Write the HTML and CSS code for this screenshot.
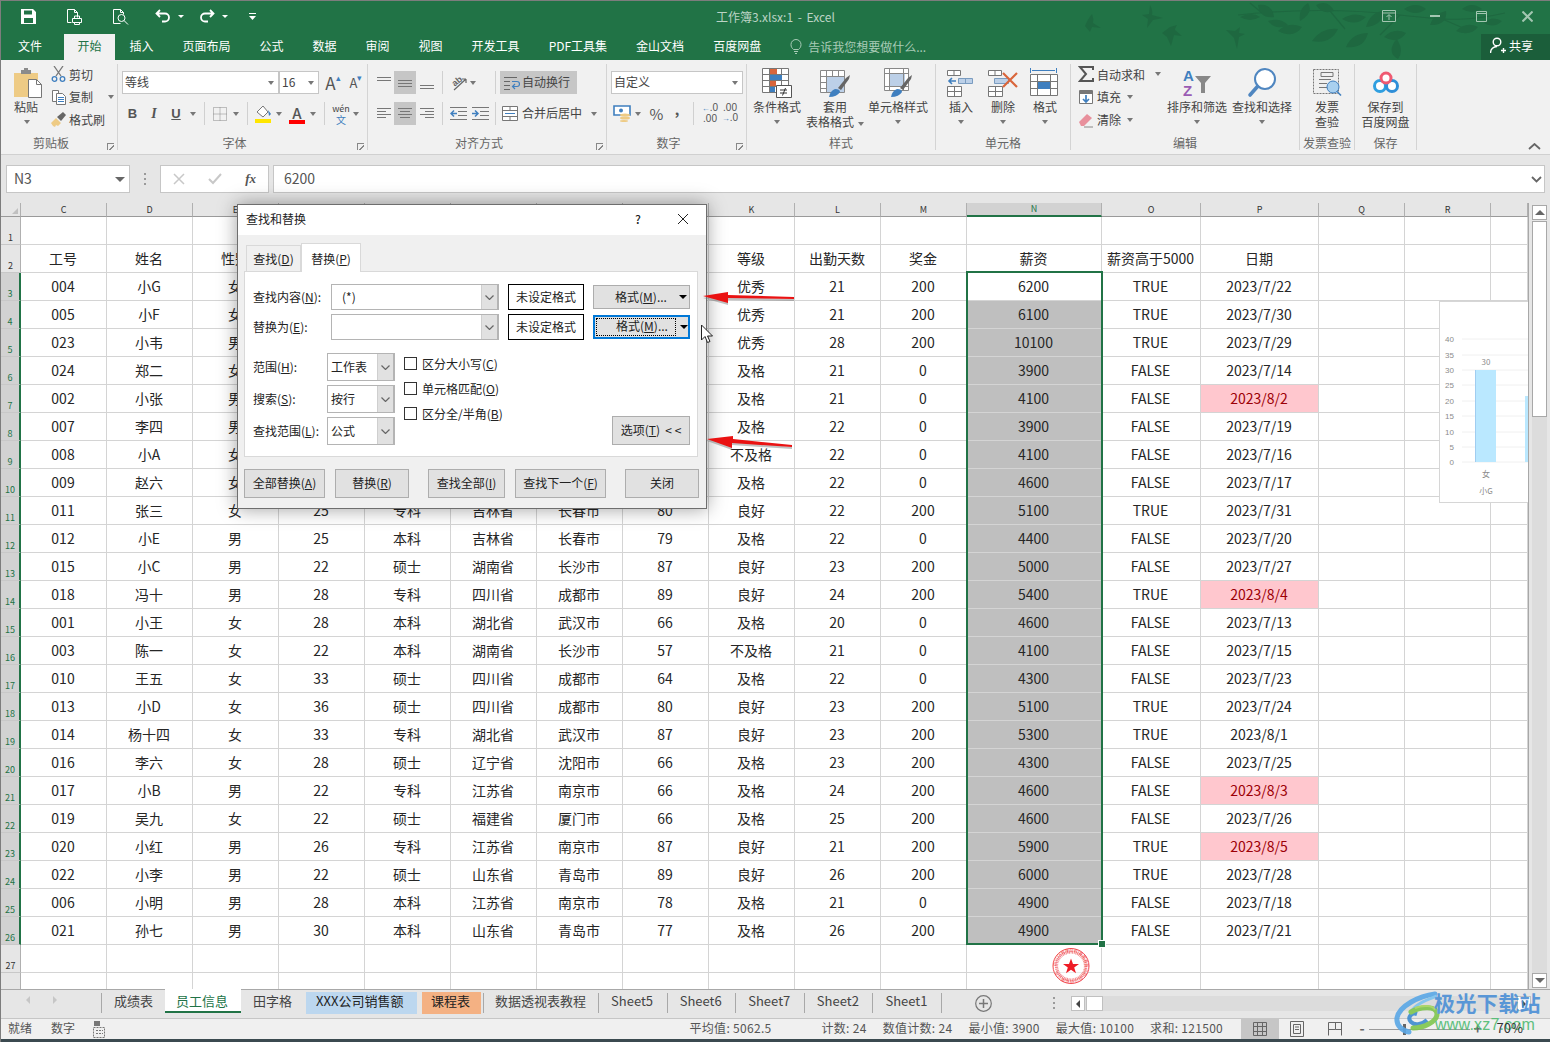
FILE: index.html
```html
<!DOCTYPE html>
<html lang="zh-CN">
<head>
<meta charset="utf-8">
<title>工作簿3.xlsx:1 - Excel</title>
<link rel="stylesheet" href="styles.css">
</head>
<body>
<div class="app">
  <header class="titlebar">
    <svg class="leaves" viewBox="1080 0 430 60" width="430" height="60">
      <path class="branch" d="M1238 14C1290 8 1350 8 1400 14S1470 20 1505 12M1262 12L1250 2M1330 10L1345 28M1400 14L1380 34M1440 17L1470 30"/>
      <path d="M1085 25q4-9 7-12q2 5 1 9l8 5l-9-1l-2 5zM1150 4q3 5 2 10l11 3l-10 2l-6 8l1-9l-6-4l7-1zM1162 32l8-6l7-2q-2 3-2 5l7 6l-8-1l-3 11l-4-9zM1226 29l9 1l5-4l-1 6l6 1l-6 3l-2 12l-3-11z"/>
      <path d="M1240 16q12-6 20 0q-10 6-20 0zM1258 4q14-2 16 12q-14 2-16-12zM1268 20q12-4 20 4q-12 6-20-4zM1278 30q10-10 24-4q-8 12-24 4zM1300 20q-2-12 8-18q6 10-8 18zM1316 4q12-6 18 6q-12 4-18-6zM1312 40q10-14 26-12q-8 16-26 12zM1342 18q12-8 24-2q-10 10-24 2zM1346 46q6-14 22-14q-4 16-22 14zM1366 26q4-14 16-16q2 14-16 16zM1384 36q10-10 22-4q-8 12-22 4zM1392 46q4-10 6-6q6 10 0 18q-8-4-6-12zM1404 8q12-8 22 0q-10 8-22 0zM1430 24q4-12 16-14q2 14-16 14zM1456 30q10-10 22-4q-8 10-22 4zM1462 8q10-8 20 0q-10 6-20 0zM1484 22q8-8 18-2q-8 8-18 2z"/>
    </svg>
    <div class="qat-line">
      <div class="qat">
        <span class="qb qb-save"><svg width="15" height="15" viewBox="0 0 15 15"><path class="wf" d="M0 0h12l3 3v12H0zM3 1.500v4h8v-4zM3 9v5h9V9z" fill-rule="evenodd"/></svg></span>
        <span class="qb qb-wide"><svg width="17" height="17" viewBox="0 0 17 17"><path class="ws" d="M1.500 1.500h7l3 3v5M1.500 1.500v13h4M8.500 1.500v3h3M6.500 10.500h9v4h-9zM8.500 10.500v-2.500h5v2.500M8.500 14.500v2h5v-2"/></svg></span>
        <span class="qb qb-wide"><svg width="17" height="17" viewBox="0 0 17 17"><path class="ws" d="M1.500 1.500h7l3 3v2M1.500 1.500v14h7M8.500 1.500v3h3"/><circle class="ws" cx="9.500" cy="10" r="3.500"/><path class="ws" d="M12 12.500l4 4"/></svg></span>
        <span class="qb qb-undo"><svg width="16" height="14" viewBox="0 0 16 14"><path class="ws2" d="M5 1L1.500 4.500L5 8M2 4.500h8a4 4 0 0 1 0 8H7"/></svg></span>
        <span class="qb qb-car"><i class="car car-w"></i></span>
        <span class="qb qb-undo qb-gap"><svg width="16" height="14" viewBox="0 0 16 14"><path class="ws2" d="M11 1l3.500 3.500L11 8M14 4.500H6a4 4 0 0 0 0 8h3"/></svg></span>
        <span class="qb qb-car"><i class="car car-w"></i></span>
        <span class="qb qb-cust"><svg width="9" height="9" viewBox="0 0 9 9"><path class="ws" d="M1 1.500h7"/><path class="wf" d="M1 4h7L4.500 8z"/></svg></span>
      </div>
      <div class="doc-title">工作簿3.xlsx:1 - Excel</div>
      <div class="winbtns">
        <span class="wb"><svg width="14" height="12" viewBox="0 0 14 12"><path class="ds" d="M.5.500h13v11H.5zM.5 3h13M7 10V5M4.500 7L7 4.500L9.500 7"/></svg></span>
        <span class="wb"><svg width="10" height="2" viewBox="0 0 10 2"><path class="ds2" d="M0 1h10"/></svg></span>
        <span class="wb"><svg width="11" height="11" viewBox="0 0 11 11"><path class="ds" d="M.5.500h10v10H.5zM.5 2.500h10"/></svg></span>
        <span class="wb"><svg width="11" height="11" viewBox="0 0 11 11"><path class="ds2" d="M.5.500l10 10M10.500.500l-10 10"/></svg></span>
      </div>
    </div>
    <nav class="tabs-line">
      <span class="rt rt-file">文件</span>
      <span class="rt rt-active">开始</span>
      <span class="rt">插入</span>
      <span class="rt">页面布局</span>
      <span class="rt">公式</span>
      <span class="rt">数据</span>
      <span class="rt">审阅</span>
      <span class="rt">视图</span>
      <span class="rt">开发工具</span>
      <span class="rt">PDF工具集</span>
      <span class="rt">金山文档</span>
      <span class="rt">百度网盘</span>
      <span class="hint"><svg width="12" height="15" viewBox="0 0 12 15"><path class="hs" d="M3.500 10.500C2 9 1 8 1 5.500a5 5 0 0 1 10 0C11 8 10 9 8.500 10.500zM4 12.500h4M5 14.500h2"/></svg>告诉我您想要做什么...</span>
      <span class="share"><svg width="16" height="17" viewBox="0 0 16 17"><circle class="ws ws-b" cx="7" cy="5" r="3.800"/><path class="ws ws-b" d="M.5 16c0-4 3-6.500 6.500-6.500M11 13.500h5M13.500 11v5"/></svg>共享</span>
    </nav>
  </header>

  <section class="ribbon">
    <div class="group g1">
      <div class="gbody">
        <div class="big paste">
          <svg width="30" height="30" viewBox="0 0 30 30"><path fill="#eecb85" d="M0 5h24v24H0z"/><path fill="#8b8b8b" d="M7 2h3V0h4v2h3v4H7z"/><path fill="#fff" stroke="#777" d="M14.500 11.500h8l5 5v13h-13z"/><path fill="none" stroke="#777" d="M22.500 11.500v5h5"/></svg>
          <span>粘贴</span><span class="cl"><i class="car"></i></span>
        </div>
        <div class="stack clip">
          <div class="srow"><svg class="sic" width="16" height="16" viewBox="0 0 16 16"><path fill="none" stroke="#777" stroke-width="1.300" d="M3 0l7 10M12 0L5 10"/><circle cx="3.500" cy="13" r="2.300" fill="none" stroke="#3f7fbf" stroke-width="1.300"/><circle cx="11.500" cy="13" r="2.300" fill="none" stroke="#3f7fbf" stroke-width="1.300"/></svg>剪切</div>
          <div class="srow"><svg class="sic" width="16" height="16" viewBox="0 0 16 16"><path fill="#fff" stroke="#777" d="M1.500 1.500h6v11h-6z"/><path fill="#fff" stroke="#777" d="M5.500 4.500h6l3 3v8h-9z"/><path stroke="#3f7fbf" d="M7 8.500h6M7 10.500h6M7 12.500h6"/></svg>复制<i class="car car-after"></i></div>
          <div class="srow"><svg class="sic" width="16" height="16" viewBox="0 0 16 16"><path fill="#eecb85" d="M0 11l5-5l5 5l-3 3l-2-1l-1 2l-2-1z"/><path fill="#666" d="M6 5l6-5l3 3l-5 6z"/></svg>格式刷</div>
        </div>
      </div>
      <div class="glabel">剪贴板</div>
      <i class="launch"></i>
    </div>

    <div class="group g2">
      <div class="gbody col">
        <div class="trow pl4">
          <div class="combo cb-font"><span>等线</span><i class="car"></i></div>
          <div class="combo cb-size"><span>16</span><i class="car"></i></div>
          <span class="tool w24 ml2 aa">A<sup class="up">▴</sup></span>
          <span class="tool w22 aa small">A<sup class="dn">▾</sup></span>
        </div>
        <div class="trow pl4 second">
          <span class="tool w21 fb">B</span>
          <span class="tool w22 fi">I</span>
          <span class="tool w22 fu">U</span>
          <span class="tool w12"><i class="car"></i></span>
          <span class="tool w10"><i class="vsep"></i></span>
          <span class="tool w22"><svg width="14" height="14" viewBox="0 0 14 14"><path fill="none" stroke="#888" stroke-dasharray="1 1" d="M.5.500h13v13H.5zM7 .500v13M.5 7h13"/></svg></span>
          <span class="tool w10"><i class="car"></i></span>
          <span class="tool w12"><i class="vsep"></i></span>
          <span class="tool w20"><svg width="17" height="19" viewBox="0 0 17 19"><path fill="#fff" stroke="#777" d="M2 8l6-6l5 6l-5 5z"/><path fill="#3f7fbf" d="M13 6l3 4l-2 2z"/><path fill="#ffe600" d="M0 15h16v4H0z"/></svg></span>
          <span class="tool w12"><i class="car"></i></span>
          <span class="tool w24 fontcol"><span class="ca">A</span><i class="redbar"></i></span>
          <span class="tool w8"><i class="car"></i></span>
          <span class="tool w14"><i class="vsep"></i></span>
          <span class="tool w20 wen"><span>wén</span><b>文</b></span>
          <span class="tool w10"><i class="car"></i></span>
        </div>
      </div>
      <div class="glabel">字体</div>
      <i class="launch"></i>
    </div>

    <div class="group g3">
      <div class="gbody col">
        <div class="trow pl6">
          <span class="tool w20"><svg width="16" height="16" viewBox="0 0 16 16"><path class="ln" d="M1 2.500h14M1 5.500h14"/></svg></span>
          <span class="tool w22 hl"><svg width="16" height="16" viewBox="0 0 16 16"><path class="ln" d="M1 5.500h14M1 8.500h14M1 11.500h14"/></svg></span>
          <span class="tool w22"><svg width="16" height="16" viewBox="0 0 16 16"><path class="ln" d="M1 10.500h14M1 13.500h14"/></svg></span>
          <span class="tool w8"><i class="vsep"></i></span>
          <span class="tool w24"><svg width="20" height="17" viewBox="0 0 20 17"><text class="abtxt" x="4" y="11" transform="rotate(-40 8 8)">ab</text><path fill="none" stroke="#666" stroke-width="1.200" d="M6 16L18 5M18 5v4M18 5h-4"/></svg></span>
          <span class="tool w6"><i class="car"></i></span>
          <span class="w14"></span>
          <span class="tool w10"><i class="vsep"></i></span>
          <span class="wrap-btn"><svg width="17" height="16" viewBox="0 0 17 16"><path fill="none" stroke="#666" d="M1 2.500h13M1 6.500h6M1 10.500h6M1 14.500h6"/><path fill="none" stroke="#3f7fbf" stroke-width="1.200" d="M9 6.500h5a2 2 0 0 1 0 5h-4M12 9l-2.500 2.500L12 14"/></svg><span class="bt">自动换行</span></span>
        </div>
        <div class="trow pl6 second">
          <span class="tool w20"><svg width="16" height="16" viewBox="0 0 16 16"><path class="ln" d="M1 2.500h14M1 5.500h9M1 8.500h14M1 11.500h9"/></svg></span>
          <span class="tool w22 hl"><svg width="16" height="16" viewBox="0 0 16 16"><path class="ln" d="M1 2.500h14M3 5.500h10M1 8.500h14M3 11.500h10"/></svg></span>
          <span class="tool w22"><svg width="16" height="16" viewBox="0 0 16 16"><path class="ln" d="M1 2.500h14M6 5.500h9M1 8.500h14M6 11.500h9"/></svg></span>
          <span class="tool w8"><i class="vsep"></i></span>
          <span class="tool w24"><svg width="17" height="14" viewBox="0 0 17 14"><path class="ln" d="M0 .500h17M8 4.500h9M8 8.500h9M0 12.500h17"/><path fill="none" stroke="#3f7fbf" stroke-width="1.500" d="M7 6.500H1M4 3.500l-3 3l3 3"/></svg></span>
          <span class="tool w20"><svg width="17" height="14" viewBox="0 0 17 14"><path class="ln" d="M0 .500h17M8 4.500h9M8 8.500h9M0 12.500h17"/><path fill="none" stroke="#3f7fbf" stroke-width="1.500" d="M0 6.500h6M3 3.500l3 3l-3 3"/></svg></span>
          <span class="tool w10"><i class="vsep"></i></span>
          <span class="tool w20"><svg width="16" height="15" viewBox="0 0 16 15"><path fill="#fff" stroke="#777" d="M.5.500h15v14H.5zM.5 4.500h15M.5 10.500h15M8 .500v4M8 10.500v4"/><path stroke="#3f7fbf" d="M3 7.500h10"/></svg></span>
          <span class="merge-text bt">合并后居中</span>
          <span class="tool w24"><i class="car"></i></span>
        </div>
      </div>
      <div class="glabel">对齐方式</div>
      <i class="launch"></i>
    </div>

    <div class="group g4">
      <div class="gbody col">
        <div class="trow pl4">
          <div class="combo cb-num"><span>自定义</span><i class="car"></i></div>
        </div>
        <div class="trow pl4 second">
          <span class="tool w22"><svg width="18" height="17" viewBox="0 0 18 17"><path fill="#fff" stroke="#3f7fbf" stroke-width="1.600" d="M1 1h16v9H1z"/><circle cx="8" cy="5.500" r="2" fill="#3f7fbf"/><ellipse cx="12" cy="10" rx="5" ry="1.500" fill="#eecb85"/><ellipse cx="12" cy="13" rx="5" ry="1.500" fill="#eecb85"/><ellipse cx="11" cy="16" rx="4" ry="1" fill="#eecb85"/></svg></span>
          <span class="tool w10"><i class="car"></i></span>
          <span class="tool w27 pct">%</span>
          <span class="tool w14 comma">,</span>
          <span class="tool w18"><i class="vsep"></i></span>
          <span class="tool w16 dec"><span><b>←</b>.0</span><span>.00</span></span>
          <span class="tool w24 dec"><span>.00</span><span><b>→</b>.0</span></span>
        </div>
      </div>
      <div class="glabel">数字</div>
      <i class="launch"></i>
    </div>

    <div class="group g5">
      <div class="gbody">
        <div class="big w60">
          <svg width="30" height="30" viewBox="0 0 30 30"><path fill="#fff" stroke="#777" d="M.5.500h26v24H.5zM7.500.500v24M.5 6.500h26M.5 12.500h26M.5 18.500h26M19.500.500v24"/><path fill="#d9663c" d="M8 1h7v5H8zM8 13h6v5H8z"/><path fill="#3f7fbf" d="M8 7h12v5H8zM8 19h5v5H8z"/><path fill="#fff" stroke="#555" d="M14.500 17.500h15v12h-15z"/><path stroke="#333" fill="none" d="M18 22h7M18 25h7M23.500 20l-3 7.500"/></svg>
          <span>条件格式</span><span class="cl"><i class="car"></i></span>
        </div>
        <div class="big w56">
          <svg width="30" height="30" viewBox="0 0 30 30"><path fill="#fff" stroke="#888" d="M.5 2.500h24v22H.5zM6.500 2.500v22M12.500 2.500v22M18.500 2.500v22M.5 8.500h24M.5 14.500h24M.5 20.500h24"/><path fill="#bcd0e8" d="M7 9h17v15H7z"/><path fill="#3f7fbf" d="M9 29q1-6 6-8q5 0 5 3q-3 5-11 5z"/><path fill="#666" d="M18 20l8-10l4-3l-1 4l-8 11z"/></svg>
          <span>套用</span><span>表格格式<i class="car car-inl"></i></span>
        </div>
        <div class="big w70">
          <svg width="30" height="30" viewBox="0 0 30 30"><path fill="#fff" stroke="#888" d="M1.500.500h24v22h-24z"/><path fill="#bcd0e8" d="M6 6h16v13H6z"/><path stroke="#888" fill="none" d="M6.500.500v22M20.500.500v22M1.500 5.500h24M1.500 18.500h24"/><path fill="#3f7fbf" d="M8 29q1-6 6-8q5 0 5 3q-3 5-11 5z"/><path fill="#666" d="M17 20l8-10l4-3l-1 4l-8 11z"/></svg>
          <span>单元格样式</span><span class="cl"><i class="car"></i></span>
        </div>
      </div>
      <div class="glabel">样式</div>
    </div>

    <div class="group g6">
      <div class="gbody">
        <div class="big w50">
          <svg width="30" height="30" viewBox="0 0 30 30"><g fill="#fff" stroke="#777"><path d="M1.500 2.500h13v5h-13zM8 2.500v5M1.500 18.500h14v10h-14zM8.500 18.500v10M1.500 23.500h14"/></g><path fill="#bcd0e8" stroke="#7a9cc0" d="M12.500 10.500h14v5h-14zM19.500 10.500v5"/><path fill="none" stroke="#3f7fbf" stroke-width="1.600" d="M3 13h7M6 10l-3 3l3 3"/></svg>
          <span>插入</span><span class="cl"><i class="car"></i></span>
        </div>
        <div class="big w34">
          <svg width="30" height="30" viewBox="0 0 30 30"><g fill="#fff" stroke="#777"><path d="M.5 2.500h13v5H.5zM7 2.500v5M.5 18.500h14v10H.5zM7.500 18.500v10M.5 23.500h14"/></g><path fill="#bcd0e8" stroke="#7a9cc0" d="M6.500 10.500h14v5h-14z"/><path fill="none" stroke="#d9663c" stroke-width="2.200" d="M15 5l14 14M29 5L15 19"/></svg>
          <span>删除</span><span class="cl"><i class="car"></i></span>
        </div>
        <div class="big w50">
          <svg width="30" height="30" viewBox="0 0 30 30"><path fill="none" stroke="#3f7fbf" d="M.5 0v5M26.500 0v5M2 2.500h23"/><path fill="#fff" stroke="#777" d="M.5 6.500h27v21H.5zM7.500 6.500v21M20.500 6.500v21M.5 13.500h27M.5 20.500h27"/><path fill="#3f7fbf" d="M8 14h12v7H8z"/></svg>
          <span>格式</span><span class="cl"><i class="car"></i></span>
        </div>
      </div>
      <div class="glabel">单元格</div>
    </div>

    <div class="group g7">
      <div class="gbody">
        <div class="stack edit">
          <div class="srow"><svg class="sic" width="16" height="16" viewBox="0 0 16 16"><path fill="none" stroke="#555" stroke-width="2" d="M15 4V1H2l6 7l-6 7h13v-3"/></svg>自动求和<i class="car car-sum"></i></div>
          <div class="srow"><svg class="sic" width="16" height="16" viewBox="0 0 16 16"><path fill="#fff" stroke="#777" d="M1.500 1.500h13v13h-13z"/><path fill="#777" d="M2 2h12v3H2z"/><path fill="none" stroke="#3f7fbf" stroke-width="1.700" d="M8 6v7M5 10l3 3l3-3"/></svg>填充<i class="car car-after2"></i></div>
          <div class="srow"><svg class="sic" width="16" height="16" viewBox="0 0 16 16"><path fill="#e8909c" d="M1 10l8-8l5 4l-8 8H3z"/><path stroke="#888" d="M6 15h9"/></svg>清除<i class="car car-after2"></i></div>
        </div>
        <div class="big w60">
          <svg width="30" height="30" viewBox="0 0 30 30"><text x="1" y="13" class="az a">A</text><text x="1" y="28" class="az z">Z</text><path fill="#888" d="M13 8h16l-6 7v10h-4V15z"/></svg>
          <span>排序和筛选</span><span class="cl"><i class="car"></i></span>
        </div>
        <div class="big w70">
          <svg width="30" height="30" viewBox="0 0 30 30"><circle cx="18" cy="11" r="10" fill="#fff" stroke="#4f86c0" stroke-width="2"/><path stroke="#4f86c0" stroke-width="3.600" stroke-linecap="round" d="M10.500 18.500L3 27"/></svg>
          <span>查找和选择</span><span class="cl"><i class="car"></i></span>
        </div>
      </div>
      <div class="glabel">编辑</div>
    </div>

    <div class="group g8">
      <div class="gbody">
        <div class="big w54">
          <svg width="30" height="30" viewBox="0 0 30 30"><path fill="#efefef" stroke="#777" stroke-dasharray="2 1" d="M1.500 1.500h25v24h-25z"/><path fill="none" stroke="#777" d="M9 4.500h12v4H9zM7 11.500h12M7 15.500h8M7 19.500h8"/><circle cx="21" cy="19" r="6" fill="#a9d0ef" stroke="#3f7fbf"/><path stroke="#3f7fbf" stroke-width="1.600" d="M25 23.500l4 4"/></svg>
          <span>发票</span><span>查验</span>
        </div>
      </div>
      <div class="glabel">发票查验</div>
    </div>

    <div class="group g9">
      <div class="gbody">
        <div class="big w61">
          <svg width="30" height="30" viewBox="0 0 30 30"><circle cx="9" cy="18" r="5.500" fill="#fff" stroke="#2f9fe0" stroke-width="3"/><circle cx="21" cy="18" r="5.500" fill="#fff" stroke="#2f8fd8" stroke-width="3"/><circle cx="15" cy="10" r="5" fill="#fff" stroke="#ef5a72" stroke-width="3"/></svg>
          <span>保存到</span><span>百度网盘</span>
        </div>
      </div>
      <div class="glabel">保存</div>
    </div>
    <div class="collapse"><svg width="13" height="7" viewBox="0 0 13 7"><path fill="none" stroke="#666" stroke-width="1.800" d="M1 6l5.500-5L12 6"/></svg></div>
  </section>

  <section class="formula">
    <div class="namebox"><span>N3</span><i class="car car-big"></i></div>
    <div class="fdots"><i></i><i></i><i></i></div>
    <div class="fbtns">
      <svg width="12" height="12" viewBox="0 0 12 12"><path fill="none" stroke="#c8c8c8" stroke-width="1.500" d="M1 1l10 10M11 1L1 11"/></svg>
      <svg width="14" height="12" viewBox="0 0 14 12"><path fill="none" stroke="#c8c8c8" stroke-width="2" d="M1 6l4 4l8-9"/></svg>
      <span class="fx">fx</span>
    </div>
    <div class="finput"><span>6200</span><svg width="11" height="7" viewBox="0 0 11 7"><path fill="none" stroke="#666" stroke-width="1.800" d="M1 1l4.500 4.500L10 1"/></svg></div>
  </section>

  <section class="sheet">
    <div class="gridwrap">
      <table class="grid">
        <colgroup><col class="c0"><col class="c"><col class="c"><col class="c"><col class="c"><col class="c"><col class="c"><col class="c"><col class="c"><col class="c"><col class="c"><col class="c"><col class="cn"><col class="co"><col class="cp"><col class="c"><col class="c"><col class="cs"></colgroup>
        <tr class="head"><th class="corner"><i></i></th><th>C</th><th>D</th><th>E</th><th>F</th><th>G</th><th>H</th><th>I</th><th>J</th><th>K</th><th>L</th><th>M</th><th class="hon">N</th><th>O</th><th>P</th><th>Q</th><th>R</th><th></th></tr>
        <tr><th>1</th><td></td><td></td><td></td><td></td><td></td><td></td><td></td><td></td><td></td><td></td><td></td><td></td><td></td><td></td><td></td><td></td><td></td></tr>
        <tr><th>2</th><td>工号</td><td>姓名</td><td>性别</td><td></td><td></td><td></td><td></td><td></td><td>等级</td><td>出勤天数</td><td>奖金</td><td>薪资</td><td>薪资高于5000</td><td>日期</td><td></td><td></td><td></td></tr>
        <tr><th class="on">3</th><td>004</td><td>小G</td><td>女</td><td></td><td></td><td></td><td></td><td></td><td>优秀</td><td>21</td><td>200</td><td>6200</td><td>TRUE</td><td>2023/7/22</td><td></td><td></td><td></td></tr>
        <tr><th class="on">4</th><td>005</td><td>小F</td><td>女</td><td></td><td></td><td></td><td></td><td></td><td>优秀</td><td>21</td><td>200</td><td class="sel">6100</td><td>TRUE</td><td>2023/7/30</td><td></td><td></td><td></td></tr>
        <tr><th class="on">5</th><td>023</td><td>小韦</td><td>男</td><td></td><td></td><td></td><td></td><td></td><td>优秀</td><td>28</td><td>200</td><td class="sel">10100</td><td>TRUE</td><td>2023/7/29</td><td></td><td></td><td></td></tr>
        <tr><th class="on">6</th><td>024</td><td>郑二</td><td>女</td><td></td><td></td><td></td><td></td><td></td><td>及格</td><td>21</td><td>0</td><td class="sel">3900</td><td>FALSE</td><td>2023/7/14</td><td></td><td></td><td></td></tr>
        <tr><th class="on">7</th><td>002</td><td>小张</td><td>男</td><td></td><td></td><td></td><td></td><td></td><td>及格</td><td>21</td><td>0</td><td class="sel">4100</td><td>FALSE</td><td class="pink">2023/8/2</td><td></td><td></td><td></td></tr>
        <tr><th class="on">8</th><td>007</td><td>李四</td><td>男</td><td></td><td></td><td></td><td></td><td></td><td>及格</td><td>22</td><td>0</td><td class="sel">3900</td><td>FALSE</td><td>2023/7/19</td><td></td><td></td><td></td></tr>
        <tr><th class="on">9</th><td>008</td><td>小A</td><td>女</td><td></td><td></td><td></td><td></td><td></td><td>不及格</td><td>22</td><td>0</td><td class="sel">4100</td><td>FALSE</td><td>2023/7/16</td><td></td><td></td><td></td></tr>
        <tr><th class="on">10</th><td>009</td><td>赵六</td><td>女</td><td></td><td></td><td></td><td></td><td></td><td>及格</td><td>22</td><td>0</td><td class="sel">4600</td><td>FALSE</td><td>2023/7/17</td><td></td><td></td><td></td></tr>
        <tr><th class="on">11</th><td>011</td><td>张三</td><td>女</td><td>25</td><td>专科</td><td>吉林省</td><td>长春市</td><td>80</td><td>良好</td><td>22</td><td>200</td><td class="sel">5100</td><td>TRUE</td><td>2023/7/31</td><td></td><td></td><td></td></tr>
        <tr><th class="on">12</th><td>012</td><td>小E</td><td>男</td><td>25</td><td>本科</td><td>吉林省</td><td>长春市</td><td>79</td><td>及格</td><td>22</td><td>0</td><td class="sel">4400</td><td>FALSE</td><td>2023/7/20</td><td></td><td></td><td></td></tr>
        <tr><th class="on">13</th><td>015</td><td>小C</td><td>男</td><td>22</td><td>硕士</td><td>湖南省</td><td>长沙市</td><td>87</td><td>良好</td><td>23</td><td>200</td><td class="sel">5000</td><td>FALSE</td><td>2023/7/27</td><td></td><td></td><td></td></tr>
        <tr><th class="on">14</th><td>018</td><td>冯十</td><td>男</td><td>28</td><td>专科</td><td>四川省</td><td>成都市</td><td>89</td><td>良好</td><td>24</td><td>200</td><td class="sel">5400</td><td>TRUE</td><td class="pink">2023/8/4</td><td></td><td></td><td></td></tr>
        <tr><th class="on">15</th><td>001</td><td>小王</td><td>女</td><td>28</td><td>本科</td><td>湖北省</td><td>武汉市</td><td>66</td><td>及格</td><td>20</td><td>0</td><td class="sel">4600</td><td>FALSE</td><td>2023/7/13</td><td></td><td></td><td></td></tr>
        <tr><th class="on">16</th><td>003</td><td>陈一</td><td>女</td><td>22</td><td>本科</td><td>湖南省</td><td>长沙市</td><td>57</td><td>不及格</td><td>21</td><td>0</td><td class="sel">4100</td><td>FALSE</td><td>2023/7/15</td><td></td><td></td><td></td></tr>
        <tr><th class="on">17</th><td>010</td><td>王五</td><td>女</td><td>33</td><td>硕士</td><td>四川省</td><td>成都市</td><td>64</td><td>及格</td><td>22</td><td>0</td><td class="sel">4300</td><td>FALSE</td><td>2023/7/23</td><td></td><td></td><td></td></tr>
        <tr><th class="on">18</th><td>013</td><td>小D</td><td>女</td><td>36</td><td>硕士</td><td>四川省</td><td>成都市</td><td>80</td><td>良好</td><td>23</td><td>200</td><td class="sel">5100</td><td>TRUE</td><td>2023/7/24</td><td></td><td></td><td></td></tr>
        <tr><th class="on">19</th><td>014</td><td>杨十四</td><td>女</td><td>33</td><td>专科</td><td>湖北省</td><td>武汉市</td><td>87</td><td>良好</td><td>23</td><td>200</td><td class="sel">5300</td><td>TRUE</td><td>2023/8/1</td><td></td><td></td><td></td></tr>
        <tr><th class="on">20</th><td>016</td><td>李六</td><td>女</td><td>28</td><td>硕士</td><td>辽宁省</td><td>沈阳市</td><td>66</td><td>及格</td><td>23</td><td>200</td><td class="sel">4300</td><td>FALSE</td><td>2023/7/25</td><td></td><td></td><td></td></tr>
        <tr><th class="on">21</th><td>017</td><td>小B</td><td>男</td><td>22</td><td>专科</td><td>江苏省</td><td>南京市</td><td>66</td><td>及格</td><td>24</td><td>200</td><td class="sel">4600</td><td>FALSE</td><td class="pink">2023/8/3</td><td></td><td></td><td></td></tr>
        <tr><th class="on">22</th><td>019</td><td>吴九</td><td>女</td><td>22</td><td>硕士</td><td>福建省</td><td>厦门市</td><td>66</td><td>及格</td><td>25</td><td>200</td><td class="sel">4600</td><td>FALSE</td><td>2023/7/26</td><td></td><td></td><td></td></tr>
        <tr><th class="on">23</th><td>020</td><td>小红</td><td>男</td><td>26</td><td>专科</td><td>江苏省</td><td>南京市</td><td>87</td><td>良好</td><td>21</td><td>200</td><td class="sel">5900</td><td>TRUE</td><td class="pink">2023/8/5</td><td></td><td></td><td></td></tr>
        <tr><th class="on">24</th><td>022</td><td>小李</td><td>男</td><td>22</td><td>硕士</td><td>山东省</td><td>青岛市</td><td>89</td><td>良好</td><td>26</td><td>200</td><td class="sel">6000</td><td>TRUE</td><td>2023/7/28</td><td></td><td></td><td></td></tr>
        <tr><th class="on">25</th><td>006</td><td>小明</td><td>男</td><td>28</td><td>本科</td><td>江苏省</td><td>南京市</td><td>78</td><td>及格</td><td>21</td><td>0</td><td class="sel">4900</td><td>FALSE</td><td>2023/7/18</td><td></td><td></td><td></td></tr>
        <tr><th class="on">26</th><td>021</td><td>孙七</td><td>男</td><td>30</td><td>本科</td><td>山东省</td><td>青岛市</td><td>77</td><td>及格</td><td>26</td><td>200</td><td class="sel">4900</td><td>FALSE</td><td>2023/7/21</td><td></td><td></td><td></td></tr>
        <tr><th>27</th><td></td><td></td><td></td><td></td><td></td><td></td><td></td><td></td><td></td><td></td><td></td><td></td><td></td><td></td><td></td><td></td><td></td></tr>
        <tr class="last"><th></th><td></td><td></td><td></td><td></td><td></td><td></td><td></td><td></td><td></td><td></td><td></td><td></td><td></td><td></td><td></td><td></td><td></td></tr>
      </table>
      <div class="selection"><i></i></div>
      <svg class="stamp" width="40" height="38" viewBox="0 0 40 38">
        <defs><path id="ring" d="M5.500 19a14.500 14 0 1 1 29 0a14.500 14 0 1 1-29 0"/></defs>
        <ellipse cx="20" cy="19" rx="18" ry="17.500" fill="#fff" fill-opacity=".5" stroke="#f2474d" stroke-width="1"/>
        <ellipse cx="20" cy="19" rx="14.500" ry="14" fill="none" stroke="#f0575c" stroke-width="3.200" stroke-dasharray="1 .7" opacity=".7"/>
        <text class="stamp-t"><textPath href="#ring">四川XX有限公司(有限责任公司)四川XX有限公司</textPath></text>
        <path fill="#ee1c25" d="M20 11.500l2 5.600h6l-4.800 3.500l1.800 5.700l-5-3.500l-5 3.500l1.800-5.700l-4.800-3.500h6z"/>
      </svg>
      <svg class="chart" width="90" height="202" viewBox="0 0 90 202">
        <rect x=".5" y=".5" width="110" height="201" fill="#fff" stroke="#d6d6d6"/>
        <path class="cg" d="M23 38h70M23 54h70M23 69h70M23 84h70M23 100h70M23 115h70M23 131h70M23 146h70M23 161h70"/>
        <rect x="36" y="69" width="21" height="92" fill="#bae8ff"/><rect x="36" y="69" width="1" height="92" fill="#a0cdf0"/>
        <rect x="86" y="95" width="4" height="66" fill="#bae8ff"/>
        <g class="cl-t"><text x="15" y="41">40</text><text x="15" y="57">35</text><text x="15" y="72">30</text><text x="15" y="87">25</text><text x="15" y="103">20</text><text x="15" y="118">15</text><text x="15" y="134">10</text><text x="15" y="149">5</text><text x="15" y="164">0</text></g>
        <g class="cl-m"><text x="47" y="64">30</text><text x="47" y="176">女</text><text x="47" y="193">小G</text></g>
      </svg>
    </div>
    <div class="vscroll">
      <span class="vbtn"><i class="car-up"></i></span>
      <span class="vthumb"></span>
      <span class="vtrack"></span>
      <span class="vbtn vdown"><i class="car car-big"></i></span>
    </div>
  </section>

  <section class="sheetbar">
    <div class="snav"><i class="tri-l"></i><i class="tri-r"></i></div>
    <div class="st">成绩表</div>
    <div class="st st-active">员工信息</div>
    <div class="st">田字格</div>
    <div class="st st-blue">XXX公司销售额</div>
    <div class="st st-orange">课程表</div>
    <div class="st st-wide">数据透视表教程</div>
    <div class="st st-sh">Sheet5</div>
    <div class="st st-sh">Sheet6</div>
    <div class="st st-sh">Sheet7</div>
    <div class="st st-sh">Sheet2</div>
    <div class="st st-sh st-end">Sheet1</div>
    <svg class="addsheet" width="17" height="17" viewBox="0 0 17 17"><circle cx="8.500" cy="8.500" r="7.800" fill="none" stroke="#777" stroke-width="1.200"/><path stroke="#777" stroke-width="1.500" d="M8.500 4v9M4 8.500h9"/></svg>
    <div class="sdots"><i></i><i></i><i></i></div>
    <div class="hscroll">
      <span class="hbtn"><i class="tri-sm"></i></span>
      <span class="hthumb"></span>
      <span class="htrack"></span>
      <span class="hbtn hright"><i class="tri-smr"></i></span>
    </div>
  </section>

  <footer class="statusbar">
    <span class="s-l">就绪</span>
    <span class="s-l s-l2">数字</span>
    <svg class="macro" width="12" height="17" viewBox="0 0 12 17"><path fill="#777" d="M1 0h6v5H1z"/><path fill="none" stroke="#777" d="M.5 6.500h11v10H.5z" stroke-dasharray="2 1"/><path stroke="#777" stroke-dasharray="2 1" d="M3 9.500h7M3 12.500h7"/></svg>
    <div class="stats">
      <span class="avg">平均值: 5062.5</span>
      <span>计数: 24</span>
      <span>数值计数: 24</span>
      <span>最小值: 3900</span>
      <span>最大值: 10100</span>
      <span>求和: 121500</span>
    </div>
    <span class="view view-on"><svg width="14" height="14" viewBox="0 0 14 14"><path fill="none" stroke="#666" d="M.5.500h13v13H.5zM4.500.500v13M9.500.500v13M.5 4.500h13M.5 9.500h13"/></svg></span>
    <span class="view"><svg width="14" height="16" viewBox="0 0 14 16"><path fill="none" stroke="#666" d="M.5.500h13v15H.5zM3.500 3.500h7v9h-7zM5 6h4M5 8.500h4"/></svg></span>
    <span class="view"><svg width="14" height="14" viewBox="0 0 14 14"><path fill="none" stroke="#666" d="M.5 13.500V.500h13v13M7.500.500v7h-7M7.500 7.500h6"/></svg></span>
    <span class="zm-minus">-</span>
    <div class="slider"><i></i></div>
    <span class="zm-plus">+</span>
    <span class="zoom">70%</span>
  </footer>
  <div class="strip"></div>
</div>

<div class="dialog">
  <div class="d-title"><span>查找和替换</span><span class="d-q">?</span><svg class="d-x" width="12" height="12" viewBox="0 0 12 12"><path fill="none" stroke="#222" d="M1 1l10 10M11 1L1 11"/></svg></div>
  <div class="d-tabs"><span class="d-tab">查找(<u>D</u>)</span><span class="d-tab d-tab-on">替换(<u>P</u>)</span></div>
  <div class="d-panel">
    <div class="d-row">
      <label class="d-label lw78">查找内容(<u>N</u>):</label>
      <div class="d-combo dc168"><span class="paren">(*)</span><i class="d-arrow"><svg width="9" height="5" viewBox="0 0 9 5"><path fill="none" stroke="#666" stroke-width="1.200" d="M.5.500l4 4l4-4"/></svg></i></div>
      <div class="d-fmt">未设定格式</div>
      <div class="d-fbtn"><span class="fb-t">格式(<u>M</u>)...</span><i class="car-blk"></i></div>
    </div>
    <div class="d-row d-row2">
      <label class="d-label lw78">替换为(<u>E</u>):</label>
      <div class="d-combo dc168"><span></span><i class="d-arrow"><svg width="9" height="5" viewBox="0 0 9 5"><path fill="none" stroke="#666" stroke-width="1.200" d="M.5.500l4 4l4-4"/></svg></i></div>
      <div class="d-fmt">未设定格式</div>
      <div class="d-fbtn d-focus"><span class="fb-t">格式(<u>M</u>)...</span><i class="car-blk"></i></div>
    </div>
    <div class="d-lower">
      <div class="d-opts">
        <div class="d-opt"><label class="d-label lw74">范围(<u>H</u>):</label><div class="d-combo dc68"><span>工作表</span><i class="d-arrow"><svg width="9" height="5" viewBox="0 0 9 5"><path fill="none" stroke="#666" stroke-width="1.200" d="M.5.500l4 4l4-4"/></svg></i></div></div>
        <div class="d-opt"><label class="d-label lw74">搜索(<u>S</u>):</label><div class="d-combo dc68"><span>按行</span><i class="d-arrow"><svg width="9" height="5" viewBox="0 0 9 5"><path fill="none" stroke="#666" stroke-width="1.200" d="M.5.500l4 4l4-4"/></svg></i></div></div>
        <div class="d-opt"><label class="d-label lw74">查找范围(<u>L</u>):</label><div class="d-combo dc68"><span>公式</span><i class="d-arrow"><svg width="9" height="5" viewBox="0 0 9 5"><path fill="none" stroke="#666" stroke-width="1.200" d="M.5.500l4 4l4-4"/></svg></i></div></div>
      </div>
      <div class="d-checks">
        <div class="d-check"><i></i>区分大小写(<u>C</u>)</div>
        <div class="d-check"><i></i>单元格匹配(<u>O</u>)</div>
        <div class="d-check"><i></i>区分全/半角(<u>B</u>)</div>
      </div>
      <div class="d-btn d-more">选项(<u>T</u>)&nbsp; &lt; &lt;</div>
    </div>
  </div>
  <div class="d-actions">
    <div class="d-btn w81">全部替换(<u>A</u>)</div>
    <div class="d-btn w74 ml10">替换(<u>R</u>)</div>
    <div class="d-btn w77 ml19">查找全部(<u>I</u>)</div>
    <div class="d-btn w91 ml10">查找下一个(<u>F</u>)</div>
    <div class="d-btn w74 ml19">关闭</div>
  </div>
</div>

<svg class="arrows" width="110" height="170" viewBox="695 285 110 170">
  <g class="arrow-shadow"><path d="M703 298l25-4l0 3l66 2l0 2l-66-1l0 5z"/><path d="M707 441l26-3l0 3l59 6l0 2l-60-4l0 5z"/></g>
  <path fill="#ea1212" d="M703 296l25-4l0 3l66 2l0 2l-66-1l0 5zM707 439l26-3l0 3l59 6l0 2l-60-4l0 5z"/>
</svg>
<svg class="cursor" width="16" height="20" viewBox="0 0 16 20"><path fill="#fff" stroke="#222" d="M1.500 1v15l3.500-3.500l2.500 6l2.500-1l-2.500-5.500h5z"/></svg>

<div class="wm">
  <svg width="52" height="46" viewBox="0 0 52 46"><path fill="none" stroke="#5aa7e6" stroke-width="5" stroke-linecap="round" d="M44 4C28 6 8 16 6 28c-1 8 6 13 12 14"/><path fill="none" stroke="#7cc3f0" stroke-width="3" d="M46 6C36 10 24 14 20 22"/><path fill="none" stroke="#3d8cd0" stroke-width="4" d="M26 24c-6-2-10 4-6 8s12 2 16-2"/><path fill="none" stroke="#7fc64e" stroke-width="5" stroke-linecap="round" d="M20 22c10-6 26-6 26 2c0 8-14 14-24 14"/><path fill="none" stroke="#a6d65e" stroke-width="2" d="M24 18c8-3 18-3 20 2"/></svg>
  <div class="wm-t"><b>极光下载站</b><span>www.xz7.com</span></div>
</div>
</body>
</html>
```
FILE: styles.css
```css
*{box-sizing:border-box;margin:0;padding:0}
html,body{width:1550px;height:1042px;overflow:hidden}
body{position:relative;font-family:"Noto Sans CJK SC","Noto Sans",sans-serif;font-size:12px;color:#444;background:#f0f0f0}
i{font-style:normal;display:block}
svg{display:block;flex:none}
.app{width:1550px;height:1042px;display:flex;flex-direction:column;border-top:1px solid #7d7d7d;border-left:1px solid #7d7d7d}

/* carets */
.car{width:0;height:0;border-left:3.500px solid transparent;border-right:3.500px solid transparent;border-top:4px solid #777;flex:none}
.car-w{border-top-color:#fff;border-left-width:3px;border-right-width:3px;border-top-width:3px}
.car-big{border-left-width:5px;border-right-width:5px;border-top-width:5px;border-top-color:#666}
.car-inl{display:inline-block;vertical-align:middle;margin-left:4px}
.car-after{margin-left:15px}
.car-after2{margin-left:6px}
.car-sum{margin-left:10px}

/* title bar */
.titlebar{height:59px;background:#217346;position:relative;flex:none}
.leaves{position:absolute;left:1079px;top:0;fill:#1e6840}
.branch{fill:none;stroke:#1e6840;stroke-width:1.200}
.qat-line{height:33px;display:grid;grid-template-columns:1fr auto 1fr;position:relative}
.qat{display:flex;align-items:center;padding-left:4px;padding-bottom:3px}
.qb{display:flex;align-items:center;justify-content:center}
.qb-save{width:46px}
.qb-wide{width:46px}
.qb-undo{width:26px;margin-left:7px}
.qb-gap{margin-left:8px}
.qb-car{width:10px}
.qb-cust{width:10px;margin-left:17px}
.wf{fill:#fff}
.ws{fill:none;stroke:#fff}
.ws-b{stroke-width:1.400}
.ws2{fill:none;stroke:#fff;stroke-width:1.800}
.ds{fill:none;stroke:#a3c6b1}
.ds2{fill:none;stroke:#a3c6b1;stroke-width:2}
.hs{fill:none;stroke:#a8cbb6}
.doc-title{align-self:center;color:#bcd3c5;font-size:12px;padding-bottom:3px;word-spacing:2px}
.winbtns{display:flex;justify-content:flex-end;align-items:center;padding-bottom:3px}
.wb{width:46px;display:flex;justify-content:center}
.tabs-line{height:26px;display:flex;align-items:center;position:relative;color:#fff}
.rt{padding:0 14.500px;line-height:24px;height:26px}
.rt-file{padding:0 22px 0 17px}
.rt-active{background:#f1f1f1;color:#217346;width:51px;padding:0;text-align:center}
.hint{display:flex;align-items:center;gap:6px;margin-left:14.500px;color:#a8cbb6;padding-bottom:2px}
.share{margin-left:auto;width:69px;height:26px;background:#1b5e3a;display:flex;align-items:center;padding:0 0 4px 9px;gap:3px;font-size:12px;margin-right:0}

/* ribbon */
.ribbon{height:95px;flex:none;display:flex;background:#f1f1f1;padding-top:4px;padding-bottom:4px;border-bottom:1px solid #d0d0d0}
.group{height:86px;display:flex;flex-direction:column;border-right:1px solid #d4d4d4;position:relative;flex:none}
.g1{width:117px}.g2{width:250px}.g3{width:239px}.g4{width:140px}.g5{width:189px}.g6{width:135px}.g7{width:229px}.g8{width:55px}.g9{width:62px}
.gbody{flex:1;display:flex;min-height:0}
.col{flex-direction:column}
.glabel{height:14px;line-height:14px;text-align:center;color:#666;font-size:12px}
.g1 .glabel,.g2 .glabel,.g3 .glabel,.g4 .glabel{padding-right:16px}
.launch{position:absolute;right:3px;bottom:0;width:7px;height:7px;border-left:1px solid #888;border-top:1px solid #888;background:linear-gradient(135deg,transparent 55%,#888 55%,#888 70%,transparent 70%)}
.big{display:flex;flex-direction:column;align-items:center;padding-top:4px;flex:none;color:#444;white-space:nowrap}
.big svg{margin-bottom:1px}
.big span{line-height:15px;height:15px;display:block}
.big .cl{display:flex;align-items:center;justify-content:center}
.paste{width:30px;margin-left:13px;align-items:flex-start}
.paste .cl{width:26px}
.w34{width:34px}.w50{width:50px}.w54{width:54px}.w56{width:56px}.w60{width:60px}.w61{width:61px}.w70{width:70px}
.stack{display:flex;flex-direction:column;flex:none}
.clip{margin-left:7px}
.edit{width:96px;padding-left:7px}
.srow{height:23px;display:flex;align-items:center;color:#444;white-space:nowrap}
.srow:first-child{height:21px;padding-bottom:1px}
.sic{margin-right:3px}
.clip .sic{margin-right:2px}
.trow{height:23px;display:flex;margin-top:7px;align-items:center}
.second{margin-top:8px}
.pl4{padding-left:4px}.pl6{padding-left:6px}
.tool{display:flex;align-items:center;justify-content:center;height:23px;flex:none}
.w6{width:6px;flex:none}.w8{width:8px}.w10{width:10px}.w12{width:12px}.w14{width:14px;flex:none}.w16{width:16px}.w18{width:18px}.w20{width:20px}.w21{width:21px}.w22{width:22px}.w24{width:24px}.w27{width:27px}
.ml2{margin-left:2px}
.hl{background:#c6c6c6}
.vsep{width:1px;height:23px;background:#d0d0d0}
.bt{padding-bottom:2px}
.combo{height:23px;background:#fff;border:1px solid #c6c6c6;display:flex;align-items:center;justify-content:space-between;padding:0 4px 0 2px;color:#444;font-size:12px;flex:none}
.combo span{padding-bottom:2px}
.cb-font{width:157px}
.cb-size{width:40px;margin-left:0}
.cb-num{width:132px}
.aa{font-size:17px;color:#555;align-items:center}
.aa.small{font-size:13px}
.aa sup{font-size:9px;color:#3f7fbf;line-height:9px;align-self:flex-start;margin-top:2px}
.fb{font-weight:700;color:#555;font-family:"Liberation Sans",sans-serif;font-size:13px}
.fi{font-style:italic;color:#555;font-weight:700;font-family:"Liberation Serif",serif;font-size:14px}
.fu{text-decoration:underline;font-weight:700;color:#555;font-family:"Liberation Sans",sans-serif;font-size:13px}
.fontcol{flex-direction:column;gap:0;padding-top:1px}
.ca{font-size:15px;line-height:15px;color:#555;font-weight:500}
.redbar{width:16px;height:4px;background:#f00}
.wen{flex-direction:column;font-size:9px;line-height:11px}
.wen span{color:#444}
.wen b{font-weight:400;color:#3f7fbf;font-size:10px}
.ln{fill:none;stroke:#777}
.abtxt{font:700 9px "Liberation Sans",sans-serif;fill:#666}
.wrap-btn{width:77px;height:23px;background:#c6c6c6;display:flex;align-items:center;padding-left:3px;gap:2px;flex:none;white-space:nowrap}
.merge-text{margin-left:2px;width:60px;white-space:nowrap}
.pct{font-size:15px;color:#555}
.comma{font-weight:700;font-size:14px;padding-bottom:10px;color:#555}
.dec{flex-direction:column;font-size:10px;line-height:10px;color:#555;font-family:"Liberation Sans",sans-serif}
.dec span{white-space:nowrap}
.dec b{color:#3f7fbf;font-weight:700;font-size:8px}
.az{font:700 15px "Liberation Sans",sans-serif}
.a{fill:#3f7fbf}
.z{fill:#9a5cb4}
.collapse{margin-left:auto;align-self:flex-end;padding:0 9px 0 0}

/* formula */
.formula{height:48px;flex:none;background:#e6e6e6;padding-top:10px;padding-bottom:10px;display:flex;align-items:stretch}
.namebox{width:124px;margin-left:5px;background:#fff;border:1px solid #c6c6c6;display:flex;align-items:center;justify-content:space-between;padding:0 4px 0 7px;font-size:14px;color:#555}
.namebox span,.finput span{padding-bottom:2px}
.fdots{width:30px;display:flex;flex-direction:column;align-items:center;justify-content:center;gap:3px}
.fdots i,.sdots i{width:2px;height:2px;background:#9a9a9a}
.fbtns{width:109px;background:#fff;border:1px solid #c6c6c6;display:flex;align-items:center;justify-content:space-between;padding:0 12px 0 12px}
.fx{font:italic 700 13px "Liberation Serif",serif;color:#555}
.finput{width:1272px;margin-left:4px;background:#fff;border:1px solid #c6c6c6;display:flex;align-items:center;justify-content:space-between;padding:0 1px 0 10px;font-size:14px;color:#555}
.finput svg{margin-right:1px}

/* sheet */
.sheet{height:787px;flex:none;display:flex;border-bottom:1px solid #a8a8a8;background:#e6e6e6}
.gridwrap{width:1528px;height:786px;overflow:hidden;position:relative;border-right:1px solid #a8a8a8;background:#fff;flex:none}
.grid{table-layout:fixed;width:1527px;border-collapse:separate;border-spacing:0;font-size:14px;color:#262626}
.c0{width:20px}.c{width:86px}.cn{width:135px}.co{width:99px}.cp{width:118px}.cs{width:37px}
.grid td{height:28px;padding:0 1px 2px 0;text-align:center;vertical-align:middle;line-height:20px;border-right:1px solid #d4d4d4;border-bottom:1px solid #d4d4d4;white-space:nowrap;overflow:hidden;background:#fff}
.grid th{height:28px;padding:0 0 1px;font-weight:400;font-size:9px;line-height:10px;vertical-align:bottom;text-align:center;background:#e6e6e6;border-right:1px solid #b0b0b0;border-bottom:1px solid #c8c8c8;color:#333}
.grid th.on{background:#d2d2d2;color:#217346;border-right:2px solid #217346}
.grid .head th{height:13px;padding:0;line-height:12px;border-right:1px solid #b0b0b0;border-bottom:1px solid #9a9a9a;vertical-align:middle}
.grid .head th.hon{background:#d2d2d2;color:#217346;border-bottom:2px solid #217346}
.corner{position:relative}
.corner i{position:absolute;right:2px;bottom:2px;width:0;height:0;border-left:6px solid transparent;border-bottom:6px solid #c0c0c0}
.grid td.sel{background:#bfbfbf}
.grid td.pink{background:#ffc7ce;color:#9c0006}
.grid .last td,.grid .last th{height:18px}
.selection{position:absolute;left:965px;top:68px;width:137px;height:674px;border:2px solid #217346;pointer-events:none}
.selection i{position:absolute;right:-4px;bottom:-4px;width:6px;height:6px;background:#217346;outline:1px solid #fff}
.stamp{position:absolute;left:1050px;top:744px}
.stamp-t{font-size:4px;fill:#ef3b42}
.chart{position:absolute;left:1438px;top:98px}
.cg{stroke:#f0f0f0;fill:none}
.cl-t{font-size:8px;fill:#8c8c8c;text-anchor:end;font-family:"Liberation Sans",sans-serif}
.cl-m{font-size:8px;fill:#8c8c8c;text-anchor:middle}
.vscroll{flex:1;display:flex;flex-direction:column;padding:2px 3px 1px 3px}
.vbtn{height:15px;background:#fff;border:1px solid #a8a8a8;display:flex;align-items:center;justify-content:center;flex:none}
.car-up{width:0;height:0;border-left:5px solid transparent;border-right:5px solid transparent;border-bottom:5px solid #666}
.vthumb{height:196px;background:#fff;border:1px solid #a8a8a8;margin-top:1px;flex:none}
.vtrack{flex:1;background:#dcdcdc}

/* sheet tabs */
.sheetbar{height:28px;flex:none;display:flex;align-items:flex-start;background:#e6e6e6;font-size:13px;color:#444}
.snav{width:100px;height:24px;display:flex;align-items:center;padding-left:25px;gap:23px;padding-bottom:4px;flex:none}
.tri-l{width:0;height:0;border-top:4px solid transparent;border-bottom:4px solid transparent;border-right:4px solid #c6c6c6}
.tri-r{width:0;height:0;border-top:4px solid transparent;border-bottom:4px solid transparent;border-left:4px solid #c6c6c6}
.st{height:20px;margin-top:3px;line-height:16px;padding:0 12px;border-left:1px solid #a8a8a8;white-space:nowrap;flex:none;color:#444}
.st-active{background:#fff;color:#217346;height:24px;margin-top:-1px;border:0;border-bottom:2px solid #217346;padding:3px 11px 0;line-height:18px;width:76px}
.st-active+.st{border-left:0}
.st-blue{background:#bcd7ef;border:0;margin-left:2px;padding:0 10px;width:111px;height:22px;margin-top:2px;line-height:18px;color:#222}
.st-orange{background:#f4b183;border:0;margin-left:5px;padding:0 9px;width:59px;height:22px;margin-top:2px;line-height:18px;color:#222}
.st-wide{margin-left:2px;padding:0 12px 0 11px}
.st-sh{padding:0 0 0 12px;width:68.600px}
.st-end{border-right:1px solid #a8a8a8;width:69.600px}
.addsheet{margin:5px 0 0 33px}
.sdots{margin:7px 0 0 61px;display:flex;flex-direction:column;gap:3px}
.hscroll{width:460px;height:15px;margin:6px 0 0 16px;display:flex;background:#dcdcdc;flex:none}
.hbtn{width:14px;background:#fff;border:1px solid #c0c0c0;display:flex;align-items:center;justify-content:center;flex:none}
.hthumb{width:17px;background:#fff;border:1px solid #c0c0c0;margin-left:1px;flex:none}
.htrack{flex:1}
.tri-sm{width:0;height:0;border-top:4px solid transparent;border-bottom:4px solid transparent;border-right:4px solid #444}
.tri-smr{width:0;height:0;border-top:4px solid transparent;border-bottom:4px solid transparent;border-left:4px solid #444}

/* status */
.statusbar{height:21px;flex:none;background:#f0f0f0;border-top:1px solid #c6c6c6;display:flex;align-items:center;font-size:12px;color:#555;position:relative}
.s-l{margin-left:7px;padding-bottom:3px}
.s-l2{margin-left:19px}
.macro{margin-left:18px}
.stats{margin-left:auto;display:flex;gap:16px;white-space:nowrap;letter-spacing:.3px;padding-bottom:3px}
.avg{margin-right:34px}
.view{width:37.500px;height:20px;display:flex;align-items:center;justify-content:center;flex:none}
.view-on{background:#c6c6c6;margin-left:18px}
.zm-minus{margin-left:6px;font-size:14px;font-weight:700;width:9px;color:#666;padding-bottom:3px}
.slider{width:101px;height:1px;background:#9a9a9a;position:relative;flex:none;margin-left:0}
.slider i{position:absolute;left:34px;top:-5px;width:3px;height:11px;background:#666}
.zm-plus{margin-left:3px;font-size:14px;font-weight:700;width:10px;color:#666;text-align:center;padding-bottom:3px}
.zoom{margin-left:14px;margin-right:27px;color:#333;font-size:13px;position:relative;z-index:6;padding-bottom:3px}
.strip{height:3px;flex:none;background:#3b4a50}

/* dialog */
.dialog{position:absolute;left:237px;top:204px;width:470px;height:305px;background:#f0f0f0;border:1px solid #6e6e6e;box-shadow:0 0 18px rgba(0,0,0,.38);color:#222;font-size:12px;z-index:5}
.d-title{height:30px;background:#fff;display:flex;align-items:center;padding:0 17px 2px 8px}
.d-title span{padding-bottom:2px}
.d-q{margin-left:auto;font-size:12px;margin-right:36px;font-weight:500}
.d-tabs{display:flex;margin-top:8px;padding-left:8px;height:28px;align-items:flex-end;position:relative;z-index:1}
.d-tab{width:55px;height:26px;display:flex;align-items:center;justify-content:center;background:#f0f0f0;border:1px solid #d9d9d9;border-bottom:0}
.d-tab-on{width:60px;height:29px;margin-bottom:-1px;background:#fff;border-bottom:0}
.d-panel{width:454px;height:186px;margin-left:6px;background:#fff;border:1px solid #d9d9d9;padding:12px 0 0 8px}
.d-row{display:flex;height:26px;align-items:center}
.d-row2{margin-top:4px}
.d-label{display:block;white-space:nowrap;padding-bottom:2px}
.lw78{width:78px}.lw74{width:74px}
.d-combo{display:flex;border:1px solid #b4b4b4;background:#fff;flex:none}
.d-combo>span{flex:1;padding:0 0 2px 3px;display:flex;align-items:center}
.dc168{width:168px;height:26px}
.dc68{width:68px;height:28px}
.d-combo>.paren{padding-left:10px}
.d-arrow{width:17px;background:#e1e1e1;border-left:1px solid #cfcfcf;border-right:1px solid #b4b4b4;display:flex;align-items:center;justify-content:center;flex:none}
.d-fmt{width:76px;height:26px;margin-left:9px;border:1px solid #000;display:flex;align-items:center;justify-content:center;flex:none;padding-bottom:2px}
.d-fbtn{width:97px;height:24px;margin-left:9px;background:#e1e1e1;border:1px solid #adadad;display:flex;align-items:center;position:relative;flex:none}
.fb-t{width:82px;text-align:center;padding:0 0 2px 12px;white-space:nowrap}
.car-blk{width:0;height:0;border-left:4px solid transparent;border-right:4px solid transparent;border-top:4px solid #000;margin-left:3px}
.d-focus{border:2px solid #0078d7}
.d-focus .fb-t{height:18px;line-height:14px;width:80px;border:1px dotted #000;margin-left:1px;padding:0 0 0 12px}
.d-focus .car-blk{margin-left:4px}
.d-lower{display:flex;margin-top:13px;height:92px}
.d-opts{display:flex;flex-direction:column;gap:4px;flex:none}
.d-opt{display:flex;align-items:center;height:28px}
.d-checks{margin-left:9px;display:flex;flex-direction:column;flex:none}
.d-check{height:25px;display:flex;align-items:center;white-space:nowrap}
.d-check:first-child{height:21px;margin-bottom:2px}
.d-check i{width:13px;height:13px;border:1px solid #333;background:#fff;margin-right:5px;flex:none}
.d-btn{height:29px;background:#e1e1e1;border:1px solid #adadad;display:flex;align-items:center;justify-content:center;white-space:pre;flex:none;padding-bottom:2px}
.d-more{width:78px;margin-left:auto;margin-right:7px;align-self:flex-end}
.d-actions{display:flex;margin-top:12px;padding-left:6px}
.w81{width:81px}.w74{width:74px}.w77{width:77px}.w91{width:91px}
.ml19{margin-left:19px}.ml10{margin-left:10px}

/* overlays */
.arrows{position:absolute;left:695px;top:285px;z-index:6}
.arrow-shadow{fill:#777;opacity:.45}
.cursor{position:absolute;left:700px;top:324px;z-index:7}
.wm{position:absolute;left:1391px;top:990px;display:flex;z-index:4;opacity:.9;pointer-events:none}
.wm-t{display:flex;flex-direction:column;margin-left:-9px}
.wm-t b{font-size:21px;line-height:24px;color:#4b8fd6;letter-spacing:.4px;white-space:nowrap}
.wm-t span{font:16px/18px "Liberation Sans",sans-serif;color:#4fbb72;margin-top:2px;margin-left:1px;letter-spacing:.2px}
```
